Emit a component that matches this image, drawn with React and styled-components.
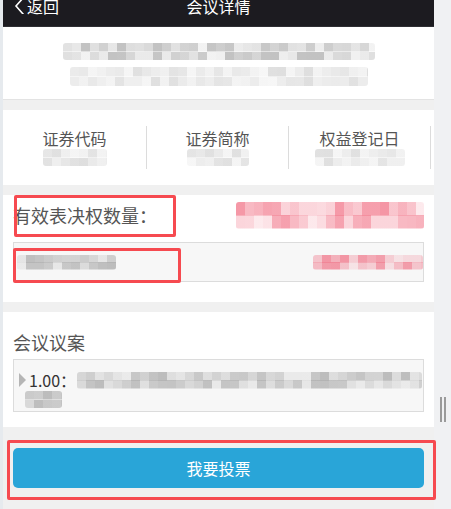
import React from "react";
import styled, { createGlobalStyle } from "styled-components";

const GlobalStyle = createGlobalStyle`
  body {
    margin: 0;
    background: #f0f1f3;
    font-family: "Noto Sans CJK SC", "Noto Sans", sans-serif;
  }
`;

// pseudo random, so the mosaic looks the same on each run
const rand = seed => {
  let s = seed;
  return () => {
    s = (s * 9301 + 49297) % 233280;
    return s / 233280;
  };
};

const tones = {
  gray: { rgb: "140,140,140", min: 0.1, max: 0.55 },
  light: { rgb: "160,160,160", min: 0.08, max: 0.35 },
  pink: { rgb: "238,80,105", min: 0.12, max: 0.6 },
};

function mosaicStyle(w, h, rows, cell, seed, tone) {
  const r = rand(seed);
  const t = tones[tone];
  const rowH = h / rows;
  const layers = [];
  const pos = [];
  for (let i = 0; i < rows; i++) {
    const stops = [];
    for (let x = 0; x < w; x += cell) {
      const a = (t.min + r() * (t.max - t.min)).toFixed(2);
      stops.push(`rgba(${t.rgb},${a}) ${x}px ${Math.min(x + cell, w)}px`);
    }
    layers.push(`linear-gradient(90deg, ${stops.join(",")})`);
    pos.push(`0 ${i * rowH}px`);
  }
  return {
    backgroundImage: layers.join(","),
    backgroundPosition: pos.join(","),
    backgroundSize: `100% ${rowH}px`,
  };
}

const MosaicBox = styled.div`
  flex: none;
  width: ${p => p.$w}px;
  height: ${p => p.$h}px;
  border-radius: 3px;
  background-repeat: no-repeat;
  filter: blur(0.4px);
`;

function Mosaic({ w, h, rows = 2, cell = 9, seed = 1, tone = "gray" }) {
  return <MosaicBox $w={w} $h={h} style={mosaicStyle(w, h, rows, cell, seed, tone)} />;
}

const Page = styled.div`
  position: relative;
  display: flex;
  min-height: 509px;
  overflow: hidden;
`;

const LeftEdge = styled.div`
  width: 3px;
  background: #e6eaee;
`;

const Main = styled.div`
  width: 431px;
  background: #f0f0f0;
  display: flex;
  flex-direction: column;
`;

const Track = styled.div`
  flex: 1;
  display: flex;
  justify-content: center;
  gap: 2px;
  padding-top: 397px;
  background: #f0f1f3;
`;

const GripLine = styled.div`
  width: 2px;
  height: 25px;
  background: #9a9a9a;
`;

const Header = styled.div`
  height: 27px;
  background: #1c1b20;
  border-bottom: 1px solid #2e2e33;
  box-sizing: border-box;
  display: grid;
  grid-template-columns: 1fr auto 1fr;
  align-items: start;
  overflow: hidden;
`;

const Back = styled.div`
  display: flex;
  align-items: flex-start;
  gap: 2px;
  padding-left: 11px;
  margin-top: -4px;
  color: #fff;
  font-size: 16px;
  line-height: 20px;
`;

const Title = styled.div`
  color: #fff;
  font-size: 16px;
  line-height: 20px;
  margin-top: -4px;
`;

const InfoCard = styled.div`
  height: 73px;
  box-sizing: border-box;
  background: #fff;
  border-bottom: 1px solid #e3e3e3;
  display: flex;
  flex-direction: column;
  align-items: center;
  padding-top: 16px;
  gap: 7px;
`;

const CodesCard = styled.div`
  margin-top: 10px;
  height: 75px;
  background: #fff;
  display: grid;
  grid-template-columns: 144px 142px 142px;
  align-items: center;
`;

const CodeCol = styled.div`
  height: 43px;
  box-sizing: border-box;
  border-right: 1px solid #dcdcdc;
  display: flex;
  flex-direction: column;
  align-items: center;
  padding-top: 2px;
  gap: 1px;
`;

const CodeLabel = styled.div`
  font-size: 16px;
  line-height: 20px;
  color: #555;
`;

const Card = styled.div`
  margin-top: 10px;
  background: #fff;
  padding: ${p => p.$pad};
`;

const LabelRow = styled.div`
  height: 40px;
  display: flex;
  align-items: center;
  justify-content: space-between;
`;

const BigLabel = styled.div`
  font-size: 18px;
  line-height: 24px;
  color: #555;
`;

const Field = styled.div`
  margin-top: ${p => p.$top}px;
  height: ${p => p.$h}px;
  box-sizing: border-box;
  border: 1px solid #dcdcdc;
  background: #f7f7f7;
`;

const ValueRow = styled.div`
  height: 100%;
  display: flex;
  align-items: center;
  justify-content: space-between;
  padding: 0 0 0 3px;
`;

const Motion = styled.div`
  padding: 11px 2px 0 5px;
  display: flex;
  flex-direction: column;
  gap: 2px;
`;

const MotionLine = styled.div`
  display: flex;
  align-items: center;
  padding-left: ${p => p.$indent || 0}px;
`;

const Arrow = styled.div`
  width: 0;
  height: 0;
  border-left: 7px solid #b5b5b5;
  border-top: 7px solid transparent;
  border-bottom: 7px solid transparent;
  margin-right: 3px;
`;

const MotionNo = styled.span`
  font-size: 16px;
  line-height: 18px;
  color: #333;
  margin-right: 1px;
`;

const Footer = styled.div`
  flex: 1;
  padding: 21px 10px 0;
`;

const VoteButton = styled.button`
  width: 100%;
  height: 40px;
  border: none;
  border-radius: 5px;
  background: #29a5d8;
  color: #fff;
  font-family: inherit;
  font-size: 16px;
`;

const Mark = styled.div`
  position: absolute;
  left: ${p => p.$x}px;
  top: ${p => p.$y}px;
  width: ${p => p.$w}px;
  height: ${p => p.$h}px;
  box-sizing: border-box;
  border: 3px solid #f64a50;
  border-radius: 2px;
  pointer-events: none;
`;

export default function App() {
  return (
    <>
      <GlobalStyle />
      <Page>
        <LeftEdge />
        <Main>
          <Header>
            <Back>
              <svg width="11" height="18" viewBox="0 0 11 18">
                <polyline points="9.5,1.5 2,10 9.5,18.5" fill="none" stroke="#fff" strokeWidth="1.6" />
              </svg>
              <span>返回</span>
            </Back>
            <Title>会议详情</Title>
            <div />
          </Header>

          <InfoCard>
            <Mosaic w={312} h={17} cell={9} seed={3} tone="gray" />
            <Mosaic w={298} h={19} cell={9} seed={7} tone="light" />
          </InfoCard>

          <CodesCard>
            <CodeCol>
              <CodeLabel>证券代码</CodeLabel>
              <Mosaic w={64} h={17} seed={11} tone="light" />
            </CodeCol>
            <CodeCol>
              <CodeLabel>证券简称</CodeLabel>
              <Mosaic w={62} h={17} seed={13} tone="light" />
            </CodeCol>
            <CodeCol>
              <CodeLabel>权益登记日</CodeLabel>
              <Mosaic w={90} h={17} seed={17} tone="light" />
            </CodeCol>
          </CodesCard>

          <Card $pad="0 10px 20px">
            <LabelRow>
              <BigLabel>有效表决权数量：</BigLabel>
              <Mosaic w={188} h={27} cell={9} seed={19} tone="pink" />
            </LabelRow>
            <Field $top={7} $h={40}>
              <ValueRow>
                <Mosaic w={99} h={15} seed={23} tone="gray" />
                <Mosaic w={110} h={15} seed={29} tone="pink" />
              </ValueRow>
            </Field>
          </Card>

          <Card $pad="18px 10px 15px">
            <BigLabel>会议议案</BigLabel>
            <Field $top={5} $h={53}>
              <Motion>
                <MotionLine>
                  <Arrow />
                  <MotionNo>1.00：</MotionNo>
                  <Mosaic w={345} h={17} seed={31} tone="gray" />
                </MotionLine>
                <MotionLine $indent={6}>
                  <Mosaic w={37} h={17} seed={37} tone="gray" />
                </MotionLine>
              </Motion>
            </Field>
          </Card>

          <Footer>
            <VoteButton>我要投票</VoteButton>
          </Footer>
        </Main>
        <Track>
          <GripLine />
          <GripLine />
        </Track>

        <Mark $x={14} $y={195} $w={162} $h={42} />
        <Mark $x={13} $y={248} $w={168} $h={35} />
        <Mark $x={7} $y={440} $w={429} $h={60} />
      </Page>
    </>
  );
}
